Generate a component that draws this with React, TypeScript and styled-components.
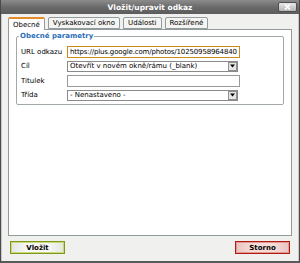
import React from 'react'
import styled, { createGlobalStyle } from 'styled-components'

const GlobalStyle = createGlobalStyle`
  html, body {
    margin: 0;
    padding: 0;
    background: #ffffff;
  }
  body {
    font-family: 'DejaVu Sans', Verdana, sans-serif;
  }
`

const Window = styled.div`
  width: 300px;
  height: 263px;
  box-sizing: border-box;
  display: flex;
  flex-direction: column;
  background: #f0f0ee;
  border-left: 1px solid #4a4a4a;
  border-right: 1px solid #4a4a4a;
  border-bottom: 2px solid #5a5a5a;
`

const TitleBar = styled.div`
  height: 14px;
  flex-shrink: 0;
  position: relative;
  display: flex;
  align-items: center;
  justify-content: center;
  background: linear-gradient(#8c8c8c, #6a6a6a 50%, #5c5c5c);
  color: #ffffff;
  font-size: 7.5px;
  font-weight: bold;
`

const CloseButton = styled.div`
  position: absolute;
  right: 2px;
  top: 2px;
  width: 19px;
  height: 10px;
  border: 1px solid #4f4f4f;
  border-radius: 2px;
  box-sizing: border-box;
  background: linear-gradient(#e8e8e8, #b5b5b5);
  display: flex;
  align-items: center;
  justify-content: center;
`

const Body = styled.div`
  flex: 1;
  display: flex;
  flex-direction: column;
  padding: 3px 6px 0 6px;
  border-left: 1px solid #c8c8c8;
  border-right: 1px solid #c8c8c8;
`

const TabRow = styled.div`
  display: flex;
  gap: 3px;
  height: 12px;
  position: relative;
  z-index: 1;
`

const Tab = styled.div<{ active?: boolean }>`
  height: ${p => (p.active ? '13px' : '12px')};
  box-sizing: border-box;
  padding: 0 4px;
  display: flex;
  align-items: center;
  font-size: 7px;
  color: #000;
  background: ${p => (p.active ? '#ffffff' : '#f4f4f2')};
  border: 1px solid #919b9c;
  border-bottom: ${p => (p.active ? 'none' : '1px solid #919b9c')};
  border-radius: 2px 2px 0 0;
  ${p => (p.active ? 'border-top: 2px solid #e68b2c;' : '')}
`

const Panel = styled.div`
  height: 207px;
  box-sizing: border-box;
  background: #ffffff;
  border: 1px solid #919b9c;
  padding: 2px 7px;
`

const Fieldset = styled.fieldset`
  margin: 0;
  padding: 6px 4px 3px 4px;
  border: 1px solid #a0a8a8;
  border-radius: 2px;
  display: flex;
  flex-direction: column;
  gap: 2.4px;
`

const Legend = styled.legend`
  padding: 0 1px;
  margin-left: -2px;
  font-size: 7px;
  font-weight: bold;
  color: #2b6fb6;
`

const FieldRow = styled.div`
  display: flex;
  align-items: center;
  height: 12px;
`

const Label = styled.div`
  width: 46px;
  font-size: 7px;
  color: #000;
`

const TextInput = styled.div<{ focused?: boolean }>`
  width: 173px;
  height: 12px;
  box-sizing: border-box;
  border: 1px solid ${p => (p.focused ? '#c98b1c' : '#9a9a9a')};
  font-size: 7px;
  letter-spacing: -0.15px;
  padding: 0 1px 0 2px;
  display: flex;
  align-items: center;
  overflow: hidden;
  white-space: nowrap;
  background: #fff;
`

const Select = styled.div`
  width: 171px;
  height: 11px;
  box-sizing: border-box;
  border: 1px solid #8a8a8a;
  font-size: 7px;
  padding-left: 2px;
  display: flex;
  align-items: center;
  justify-content: space-between;
  white-space: nowrap;
  background: #fff;
`

const SelectArrow = styled.div`
  width: 9px;
  height: 9px;
  box-sizing: border-box;
  border: 1px solid #8f8f8f;
  background: #e6e6e6;
  display: flex;
  align-items: center;
  justify-content: center;
`

const Footer = styled.div`
  display: flex;
  justify-content: space-between;
  padding: 5px 2px 0 2px;
`

const Button = styled.div<{ variant: 'ok' | 'cancel' }>`
  width: 55px;
  height: 13px;
  box-sizing: border-box;
  display: flex;
  align-items: center;
  justify-content: center;
  font-size: 7px;
  font-weight: bold;
  border: 1px solid ${p => (p.variant === 'ok' ? '#7e9a19' : '#b01a10')};
  box-shadow: inset 0 0 0 1px ${p => (p.variant === 'ok' ? '#c9d97a' : '#e49a92')};
  background: ${p =>
    p.variant === 'ok'
      ? 'linear-gradient(90deg, #e4e4e0, #f8f8f6 30%, #f8f8f6 70%, #e4e4e0)'
      : 'linear-gradient(90deg, #e9c4c0, #f6dcd8 30%, #f6dcd8 70%, #e9c4c0)'};
`

const Arrow = () => (
  <svg width="5" height="4" viewBox="0 0 5 4">
    <path d="M0 0.5h5L2.5 3.5z" fill="#000" />
  </svg>
)

export default function App() {
  return (
    <>
      <GlobalStyle />
      <Window>
        <TitleBar>
          Vložit/upravit odkaz
          <CloseButton>
            <svg width="7" height="6" viewBox="0 0 7 6">
              <path d="M1 0.5l5 5M6 0.5l-5 5" stroke="#fff" strokeWidth="1.6" />
            </svg>
          </CloseButton>
        </TitleBar>
        <Body>
          <TabRow>
            <Tab active>Obecné</Tab>
            <Tab>Vyskakovací okno</Tab>
            <Tab>Události</Tab>
            <Tab>Rozšířené</Tab>
          </TabRow>
          <Panel>
            <Fieldset>
              <Legend>Obecné parametry</Legend>
              <FieldRow>
                <Label>URL odkazu</Label>
                <TextInput focused>https://plus.google.com/photos/10250958964840</TextInput>
              </FieldRow>
              <FieldRow>
                <Label>Cíl</Label>
                <Select>
                  Otevřít v novém okně/rámu (_blank)
                  <SelectArrow>
                    <Arrow />
                  </SelectArrow>
                </Select>
              </FieldRow>
              <FieldRow>
                <Label>Titulek</Label>
                <TextInput />
              </FieldRow>
              <FieldRow>
                <Label>Třída</Label>
                <Select>
                  - Nenastaveno -
                  <SelectArrow>
                    <Arrow />
                  </SelectArrow>
                </Select>
              </FieldRow>
            </Fieldset>
          </Panel>
          <Footer>
            <Button variant="ok">Vložit</Button>
            <Button variant="cancel">Storno</Button>
          </Footer>
        </Body>
      </Window>
    </>
  )
}
